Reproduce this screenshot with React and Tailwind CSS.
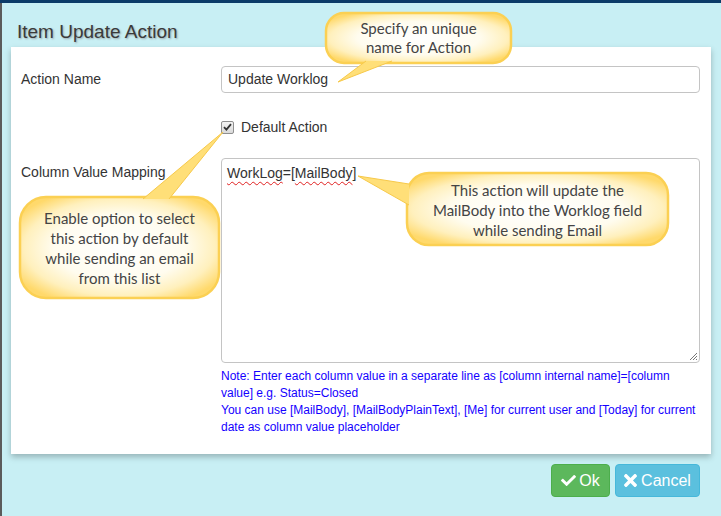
import React from 'react';
import { FaCheck, FaTimes } from 'react-icons/fa';

// bubble drawing: rounded box plus a pointing tail, all in page coordinates
const bubbles = [
  { id: 'b1', x: 326, y: 13, w: 185, h: 50, r: 18, tail: [[366, 61], [392, 61], [338, 82]] },
  { id: 'b2', x: 20, y: 197, w: 199, h: 101, r: 26, tail: [[143, 199], [169, 199], [223, 132]] },
  { id: 'b3', x: 407, y: 173, w: 261, h: 72, r: 22, tail: [[409, 184], [409, 205], [358, 176]] },
];

const notes = [
  { x: 326, y: 19, w: 185, lines: ['Specify an unique', 'name for Action'], lh: 19 },
  { x: 20, y: 208, w: 199, lines: ['Enable option to select', 'this action by default', 'while sending an email', 'from this list'], lh: 20 },
  { x: 407, y: 180, w: 261, lines: ['This action will update the', 'MailBody into the Worklog field', 'while sending Email'], lh: 20 },
];

const Bubbles = () => (
  <svg className="absolute inset-0 pointer-events-none" width="721" height="516" viewBox="0 0 721 516">
    <defs>
      <radialGradient id="bubbleFill" cx="50%" cy="50%" r="60%">
        <stop offset="0%" stopColor="#ffffff" />
        <stop offset="55%" stopColor="#fffcef" />
        <stop offset="80%" stopColor="#fff0bd" />
        <stop offset="100%" stopColor="#ffd96b" />
      </radialGradient>
    </defs>
    {bubbles.map((b) => (
      <g key={b.id}>
        <rect x={b.x} y={b.y} width={b.w} height={b.h} rx={b.r} fill="url(#bubbleFill)" stroke="#fbd053" strokeWidth="2.5" />
        <polygon points={b.tail.map((p) => p.join(',')).join(' ')} fill="#ffdf78" />
        <polyline
          points={[b.tail[0], b.tail[2], b.tail[1]].map((p) => p.join(',')).join(' ')}
          fill="none"
          stroke="#f7c94a"
          strokeWidth="1"
        />
      </g>
    ))}
  </svg>
);

const CheckBox = () => (
  <span className="w-[13px] h-[13px] rounded-[2px] border border-[#8f8f8f] bg-gradient-to-b from-[#f4f4f4] to-[#d9d9d9] flex items-center justify-center">
    <svg width="9" height="8" viewBox="0 0 9 8">
      <path d="M1 4.2 L3.4 6.6 L8 1.2" fill="none" stroke="#333" strokeWidth="1.8" />
    </svg>
  </span>
);

export default function App() {
  return (
    <div className="relative w-[721px] h-[516px] overflow-hidden bg-[#c8eff4] font-['Liberation_Sans',Arial,sans-serif] text-[#333]">
      <div className="h-[3px] bg-[#0b3b68]" />
      <div className="flex">
        <div className="w-[2px] h-[513px] bg-[#5b5b5b]" />
        <div className="flex-1">
          <div className="pl-[15px] pt-[18px] h-[44px] text-[19px] leading-[22px] text-[#3a3a3a] [text-shadow:1px_1px_2px_#9aa4a8]">
            Item Update Action
          </div>

          <div className="ml-[9px] w-[700px] bg-white shadow-[0_3px_6px_rgba(0,0,0,0.25)] pt-[19px] pl-[10px] pr-[11px] pb-[18px]">
            <div className="flex items-center h-[27px] text-[14px]">
              <div className="w-[200px]">Action Name</div>
              <div className="flex-1 h-[27px] border border-[#c4c4c4] rounded-[4px] px-[6px] flex items-center">
                Update Worklog
              </div>
            </div>

            <div className="flex items-center mt-[27px] pl-[200px] h-[14px] text-[14px]">
              <CheckBox />
              <span className="ml-[7px]">Default Action</span>
            </div>

            <div className="flex mt-[24px] text-[14px]">
              <div className="w-[200px] pt-[4px] leading-[20px]">Column Value Mapping</div>
              <div className="relative flex-1 h-[205px] border border-[#c4c4c4] rounded-[4px] px-[5px] pt-[4px] leading-[20px]">
                <span className="underline decoration-wavy decoration-[#e02020] decoration-1 underline-offset-[3px]">WorkLog</span>
                =[
                <span className="underline decoration-wavy decoration-[#e02020] decoration-1 underline-offset-[3px]">MailBody</span>]
                <svg className="absolute right-[2px] bottom-[2px]" width="8" height="8" viewBox="0 0 8 8">
                  <path d="M1 8 L8 1 M4 8 L8 4 M7 8 L8 7" stroke="#777" strokeWidth="1" />
                </svg>
              </div>
            </div>

            <div className="ml-[200px] mt-[5px] text-[12px] leading-[17px] text-[#1400ff]">
              <div>Note: Enter each column value in a separate line as [column internal name]=[column value] e.g. Status=Closed</div>
              <div>You can use [MailBody], [MailBodyPlainText], [Me] for current user and [Today] for current date as column value placeholder</div>
            </div>
          </div>

          <div className="flex justify-end gap-[5px] mt-[10px] ml-[9px] w-[700px] pr-[11px] text-[16px] text-white">
            <button className="h-[33px] w-[59px] rounded-[4px] bg-[#5cb85c] border border-[#4cae4c] flex items-center justify-center gap-[3px]">
              <FaCheck className="w-[15px] h-[15px]" />
              <span>Ok</span>
            </button>
            <button className="h-[33px] w-[85px] rounded-[4px] bg-[#5bc0de] border border-[#46b8da] flex items-center justify-center gap-[4px]">
              <FaTimes className="w-[13px] h-[19px]" />
              <span>Cancel</span>
            </button>
          </div>
        </div>
      </div>

      <Bubbles />
      {notes.map((n, i) => (
        <div
          key={i}
          className="absolute text-center text-[15px] text-[#444] font-['Lato','Open_Sans',sans-serif]"
          style={{ left: n.x, top: n.y, width: n.w, lineHeight: `${n.lh}px` }}
        >
          {n.lines.map((l) => (
            <div key={l}>{l}</div>
          ))}
        </div>
      ))}
    </div>
  );
}
